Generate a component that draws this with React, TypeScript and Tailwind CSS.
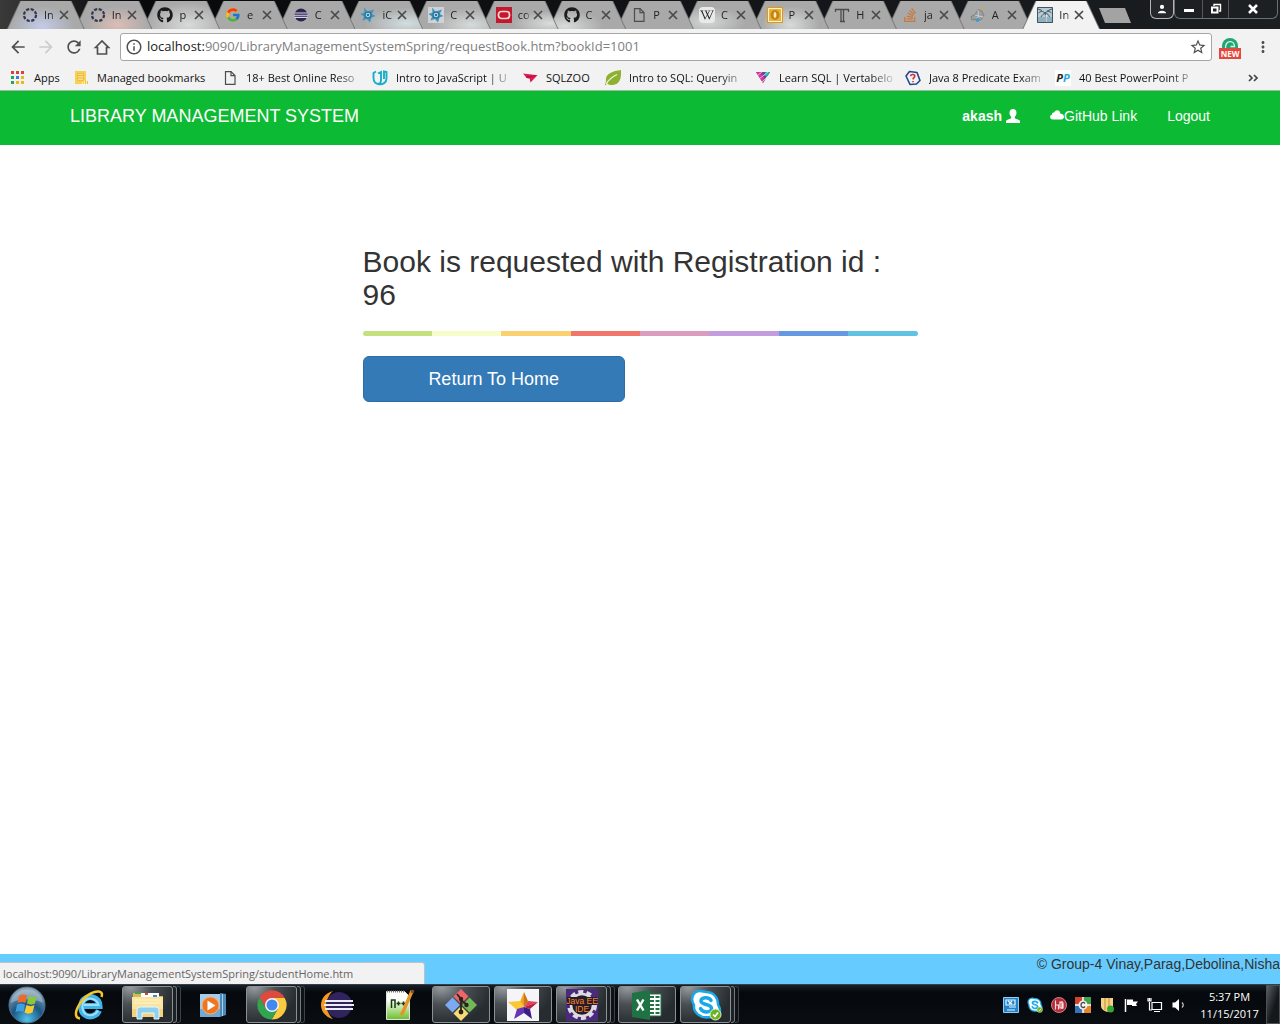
import type { ReactNode } from "react";
import { FaGithub, FaStackOverflow, FaWikipediaW } from "react-icons/fa";
import { FcGoogle } from "react-icons/fc";
import {
  MdArrowBack,
  MdArrowForward,
  MdInfoOutline,
  MdMoreVert,
  MdRefresh,
  MdStarBorder,
} from "react-icons/md";

/* ---------- small icons used in tabs and bookmarks ---------- */

const DottedRing = () => (
  <svg viewBox="0 0 16 16" className="size-4" fill="none" stroke="#34364f" strokeWidth="2.2">
    <circle cx="8" cy="8" r="6" strokeDasharray="3.2 1.51" />
  </svg>
);

const EclipseBall = () => (
  <svg viewBox="0 0 16 16" className="size-4">
    <circle cx="8" cy="8" r="6.5" fill="#2f2350" />
    <path d="M1.5 6h13M1 8.2h14M1.5 10.4h13" stroke="#d9d6e6" strokeWidth="1.1" />
  </svg>
);

const Compass = ({ boxed = false }: { boxed?: boolean }) => (
  <svg viewBox="0 0 16 16" className="size-4">
    {boxed && <path fill="#d0d2d4" d="M0 0h16v16H0z" />}
    <path d="M4 .5 7.500 4.500 14 2.500 11.800 7 15.500 9 11.500 10.500 10 15.500 7 12 2.500 13.500 4 9.500.5 7 4.500 5.500z" fill="#3f93bd" />
    <circle cx="8" cy="8" r="3.600" fill="#2c7398" />
    <circle cx="8" cy="8" r="2.300" fill="#a9d8ea" />
    <circle cx="8" cy="8" r="1.100" fill="#1d5674" />
  </svg>
);

const OracleMark = () => (
  <svg viewBox="0 0 16 16" className="size-4">
    <path fill="#c4182c" d="M0 0h16v16H0z" />
    <rect x="2.500" y="4.500" width="11" height="7" rx="3" fill="none" stroke="#f3d9dc" strokeWidth="1.700" />
  </svg>
);

const PageIcon = () => (
  <svg viewBox="0 0 16 16" className="size-4" fill="none" stroke="#4d4d4d" strokeWidth="1.200">
    <path d="M3.500 1.600h5.500l4 4v8.800H3.500z" />
    <path d="M9 1.600v4h4" />
  </svg>
);

const WikiMark = () => (
  <span className="flex size-4 items-center justify-center rounded-sm bg-[#e9e9e9]">
    <FaWikipediaW className="size-3.5 text-[#222222]" />
  </span>
);

const GoldMark = () => (
  <svg viewBox="0 0 16 16" className="size-4">
    <path fill="#d99a1e" d="M0 0h16v16H0z" />
    <path d="M1.500 1.500h13v13h-13z" fill="#e8b23c" stroke="#fff0c4" />
    <ellipse cx="8" cy="8" rx="4.500" ry="5" fill="#c7850f" />
    <ellipse cx="8" cy="8" rx="1.400" ry="3" fill="#fff0c4" />
  </svg>
);

const TypeMark = () => (
  <svg viewBox="0 0 16 16" className="size-4" fill="none" stroke="#4c4c4c">
    <path d="M1.500 5V2.500h13V5M6 14.500h5M7 3v11M9.500 3v11" strokeWidth="1.300" />
  </svg>
);

const SketchMark = () => (
  <svg viewBox="0 0 16 16" className="size-4" fill="none">
    <path d="M1 9.500l4-2 3-5 4 1.500 2 5-3 4-5-.5-4 .5z" fill="#999ea1" stroke="#7d8285" />
    <path d="M8 3l.5 6 5 1M5 8l4 1-3 3" stroke="#c8ccce" />
    <path d="M10.500 1.500l3 2" stroke="#d8a050" strokeWidth="1.800" />
    <circle cx="7.500" cy="13" r="1.900" fill="#4a96c8" />
  </svg>
);

const PalmMark = () => (
  <svg viewBox="0 0 16 16" className="size-4">
    <path fill="#b8ccd4" d="M0 0h16v16H0z" />
    <path fill="#8fb0bf" d="M0 10h16v6H0z" />
    <path
      d="M.5.500h15v15H.500zM8.500 15c.3-4 .2-6-.5-9M8 6C6 4 3.500 4 1.500 6M8 6c2-2 4.500-2 6.500 0M8 6C6.500 7 5 8 4 10M8 6c2 0 4 2 4.500 4M1 2l4 1.500M15 2l-5 2"
      fill="none"
      stroke="#3d5662"
      strokeWidth="1"
    />
    <path d="M9 8v7" stroke="#f2f6f7" />
  </svg>
);

const AppsGrid = () => (
  <svg viewBox="0 0 16 16" className="size-4">
    <path fill="#d94235" d="M1 1h3v3H1zM6 1h3v3H6zM11 1h3v3h-3z" />
    <path fill="#26a35a" d="M1 6h3v3H1zM1 11h3v3H1z" />
    <path fill="#3b7de0" d="M6 6h3v3H6z" />
    <path fill="#e9b91c" d="M11 6h3v3h-3zM6 11h3v3H6zM11 11h3v3h-3z" />
  </svg>
);

const FolderMark = () => (
  <svg viewBox="0 0 16 16" className="size-4">
    <path fill="#f8d054" d="M2 1h11v13H2z" />
    <path d="M4.500 3.500h6v7h-6z" fill="#fbe08a" stroke="#eebf3a" />
    <path d="M5 5.500h5M5 8h5" stroke="#e6b93d" />
    <path d="M11.500 14v-3.500M13.500 14v-3.500M9.500 14v-2" stroke="#fff1b5" />
    <path d="M12.500 10v4M14.500 11v3" stroke="#eebf3a" />
  </svg>
);

const UdacityMark = () => (
  <svg viewBox="0 0 16 16" className="size-4" fill="none" stroke="#17aecb" strokeWidth="1.900">
    <path d="M4 1.500 1.500 3v5c0 4 2.500 6 5.500 6" />
    <path d="M6 3.500 9 2v8c0 2-1 4-3 4 5 1 8.500-1.500 8.500-5.500V2l-2.500-.5v7.500" />
  </svg>
);

const ZooMark = () => (
  <svg viewBox="0 0 16 16" className="size-4">
    <path fill="#e01a4f" d="M1 3.500l14.500 1.800-7 7.200-.8-3.700-3-.8z" />
    <path fill="#a80f3a" d="M15.500 5.300 4.700 8l-.5-1.500z" />
  </svg>
);

const LeafMark = () => (
  <svg viewBox="0 0 16 16" className="size-4">
    <path fill="#8fb132" d="M16 0c.5 8-1 14-8 15-3 .4-5-.5-6-2l-1 2H0c0-2 1-3 1-4C0 4 7 1 16 0z" />
    <path d="M1 14C4 9 7 7 12 4.500" stroke="#eef4d4" strokeWidth="1.300" fill="none" />
  </svg>
);

const VertabeloMark = () => (
  <svg viewBox="0 0 16 16" className="size-4">
    <path fill="#7a3fa0" d="M1 2h14L8 13z" />
    <path fill="#d6349a" d="M1 2h4l5 7-2 4z" />
    <path fill="#27b4a8" d="M11 2h4l-3 5-3-2z" />
    <path d="M2 6l6-5M4 9l9-7M7 12l8-8" stroke="#f2f2f2" strokeWidth=".7" />
  </svg>
);

const QuestionMark = () => (
  <svg viewBox="0 0 16 16" className="size-4" fill="none">
    <path d="M4.500 1.500 12 2.500 15 10.500 11.500 14 5 14.500 1 6z" stroke="#24478f" strokeWidth="1.600" strokeLinejoin="round" />
    <path d="M5.500 6.200c.5-2.500 5-2 4.200.3C9.300 7.700 8.300 7.700 8 9.300M8 11v1.300" stroke="#d13434" strokeWidth="1.600" />
  </svg>
);

const PpMark = () => (
  <span className="flex size-4 items-center justify-center bg-white text-[11px] leading-4 font-bold italic">
    <span className="text-[#222222]">P</span>
    <span className="text-[#2aa5d8]">P</span>
  </span>
);

/* ---------- browser tab strip ---------- */

type Tab = { icon: ReactNode; title: string; glow?: string; active?: boolean };

const darkGithub = <FaGithub className="size-4 text-[#1b1b1b]" />;

const tabs: Tab[] = [
  { icon: <DottedRing />, title: "In", glow: "bg-[radial-gradient(ellipse_at_45%_90%,#c3cbe8,transparent_55%)]" },
  { icon: <DottedRing />, title: "In", glow: "bg-[radial-gradient(ellipse_at_55%_85%,#dcbdb6,transparent_55%)]" },
  { icon: darkGithub, title: "p", glow: "bg-[radial-gradient(ellipse_at_60%_85%,#d8dbd9,transparent_65%)]" },
  { icon: <FcGoogle className="size-4" />, title: "e" },
  { icon: <EclipseBall />, title: "C" },
  { icon: <Compass />, title: "iC", glow: "bg-[radial-gradient(ellipse_at_80%_80%,#d2dedf,transparent_50%)]" },
  { icon: <Compass boxed />, title: "C", glow: "bg-[radial-gradient(ellipse_at_75%_85%,#d6dada,transparent_50%)]" },
  { icon: <OracleMark />, title: "co", glow: "bg-[radial-gradient(ellipse_at_90%_80%,#dadddb,transparent_40%)]" },
  { icon: darkGithub, title: "C", glow: "bg-[radial-gradient(ellipse_at_20%_90%,#d8dcda,transparent_45%)]" },
  { icon: <PageIcon />, title: "P" },
  { icon: <WikiMark />, title: "C", glow: "bg-[radial-gradient(ellipse_at_30%_75%,#d4d6d6,transparent_50%)]" },
  { icon: <GoldMark />, title: "P", glow: "bg-[radial-gradient(ellipse_at_50%_85%,#d8dada,transparent_55%)]" },
  { icon: <TypeMark />, title: "H" },
  { icon: <FaStackOverflow className="size-4 text-[#c8793f]" />, title: "ja" },
  { icon: <SketchMark />, title: "A" },
  { icon: <PalmMark />, title: "In", active: true },
];

function BrowserTab({ tab, index }: { tab: Tab; index: number }) {
  return (
    <div
      className="relative flex h-7 min-w-0 flex-1 items-center pl-[15px]"
      style={{ zIndex: tab.active ? 30 : 20 - index }}
    >
      <div className="absolute inset-y-0 -right-[10px] left-0 bg-[#777777] [clip-path:polygon(13px_0,calc(100%-13px)_0,100%_100%,0_100%)]" />
      <div
        className={`absolute inset-y-0 -right-[9px] left-px [clip-path:polygon(13px_0,calc(100%-13px)_0,100%_100%,0_100%)] ${
          tab.active ? "bg-[#f2f2f2]" : "bg-[#a9a9a9]"
        }`}
      >
        {tab.glow && <div className={`size-full ${tab.glow}`} />}
      </div>
      <button type="button" className="relative flex items-center gap-1.5">
        {tab.icon}
        <span className="w-3.5 text-left text-[11px] whitespace-nowrap text-[#222222] [mask-image:linear-gradient(to_right,black_50%,transparent_95%)]">
          {tab.title}
        </span>
      </button>
      <button type="button" aria-label="Close tab" className="relative">
        <svg viewBox="0 0 12 12" className="size-3" stroke="#4a4a4a" strokeWidth="1.700">
          <path d="M2 2l8 8M10 2l-8 8" />
        </svg>
      </button>
    </div>
  );
}

function WindowControls() {
  return (
    <div className="flex h-[19px] shrink-0 pr-0.5">
      <button
        type="button"
        aria-label="Profile"
        className="flex w-6 items-center justify-center rounded-b-md border border-t-0 border-[#b5b5b5] bg-[#25272a]"
      >
        <svg viewBox="0 0 12 12" className="size-2.5" fill="white">
          <circle cx="6" cy="3.500" r="2.500" />
          <path d="M1 11c0-4 10-4 10 0z" />
        </svg>
      </button>
      <div className="flex w-[104px] rounded-b-md border border-t-0 border-[#6d7072] bg-[#1d2022]">
        <button type="button" aria-label="Minimize" className="flex w-7 items-center justify-center border-r border-[#55585a]">
          <svg viewBox="0 0 12 12" className="size-3" fill="white">
            <path d="M1 6h10v3H1z" />
          </svg>
        </button>
        <button type="button" aria-label="Restore" className="flex w-[26px] items-center justify-center border-r border-[#55585a]">
          <svg viewBox="0 0 12 12" className="size-3" fill="none" stroke="white">
            <path d="M4 3V1.500h6.500V8H9" strokeWidth="1.400" />
            <path d="M2 4.500h5.500v5H2z" strokeWidth="2" />
          </svg>
        </button>
        <button type="button" aria-label="Close" className="flex flex-1 items-center justify-center">
          <svg viewBox="0 0 12 12" className="size-3" stroke="white" strokeWidth="2.500">
            <path d="M2 2l8 8M10 2l-8 8" />
          </svg>
        </button>
      </div>
    </div>
  );
}

function TabStrip() {
  return (
    <div className="flex h-[29px] bg-linear-to-r from-[#3a3a3a] via-[#08090b] via-10% to-[#1c1f22]">
      <div className="flex min-w-0 flex-1 items-end pl-[7px]">
        {tabs.map((tab, index) => (
          <BrowserTab key={index} tab={tab} index={index} />
        ))}
      </div>
      <div className="flex w-[190px] shrink-0 justify-between pl-[9px]">
        <button
          type="button"
          aria-label="New tab"
          className="mt-2 h-[15px] w-8 bg-[#a3a3a3] [clip-path:polygon(0_0,26px_0,100%_100%,6px_100%)]"
        />
        <WindowControls />
      </div>
    </div>
  );
}

/* ---------- address bar and bookmarks ---------- */

function AddressBar() {
  return (
    <div className="flex h-9 items-center pl-2">
      <div className="flex w-28 shrink-0 items-center gap-2 text-[#505050]">
        <button type="button" aria-label="Back">
          <MdArrowBack className="size-5" />
        </button>
        <button type="button" aria-label="Forward" className="text-[#cccccc]">
          <MdArrowForward className="size-5" />
        </button>
        <button type="button" aria-label="Reload">
          <MdRefresh className="size-5" />
        </button>
        <button type="button" aria-label="Home">
          <svg viewBox="0 0 20 20" className="size-5" fill="none" stroke="currentColor" strokeWidth="1.700">
            <path d="M3.500 10.500 10 4l6.500 6.500h-2V17h-9v-6.500z" />
          </svg>
        </button>
      </div>
      <div className="flex h-7 min-w-0 flex-1 items-center rounded-[3px] border border-[#a6a6a6] bg-white px-1">
        <MdInfoOutline className="size-[18px] shrink-0 text-[#505050]" />
        <p className="ml-1 flex-1 truncate text-[13px] text-[#808080]">
          <span className="text-[#222222]">localhost:</span>9090/LibraryManagementSystemSpring/requestBook.htm?bookId=1001
        </p>
        <button type="button" aria-label="Bookmark this page">
          <MdStarBorder className="size-[18px] text-[#505050]" />
        </button>
      </div>
      <div className="flex w-[68px] shrink-0 items-center justify-between pr-2 pl-[7px]">
        <button type="button" aria-label="Grammar extension" className="flex w-[22px] flex-col items-center pt-0.5">
          <svg viewBox="0 0 16 10" className="h-2.5 w-4">
            <path fill="#1fa672" d="M0 10V8a8 8 0 0 1 16 0v2z" />
            <path d="M3.500 10c0-8 8-8 9-2.500v1H8.500" fill="none" stroke="#dff5ec" strokeWidth="1.300" />
          </svg>
          <span className="w-full bg-[#e2483d] text-center text-[8px] leading-[11px] font-bold text-white">NEW</span>
        </button>
        <button type="button" aria-label="Menu">
          <MdMoreVert className="size-[18px] text-[#505050]" />
        </button>
      </div>
    </div>
  );
}

const bookmarks = [
  { icon: <AppsGrid />, label: "Apps", width: "w-[27px]" },
  { icon: <FolderMark />, label: "Managed bookmarks", width: "w-[113px]" },
  { icon: <PageIcon />, label: "18+ Best Online Reso", width: "w-[114px]", fade: true },
  { icon: <UdacityMark />, label: "Intro to JavaScript | U", width: "w-[114px]", fade: true },
  { icon: <ZooMark />, label: "SQLZOO", width: "w-[47px]" },
  { icon: <LeafMark />, label: "Intro to SQL: Queryin", width: "w-[114px]", fade: true },
  { icon: <VertabeloMark />, label: "Learn SQL | Vertabelo", width: "w-[114px]", fade: true },
  { icon: <QuestionMark />, label: "Java 8 Predicate Exam", width: "w-[114px]", fade: true },
  { icon: <PpMark />, label: "40 Best PowerPoint P", width: "w-[114px]", fade: true },
];

function BookmarkBar() {
  return (
    <nav className="flex h-[26px] items-center gap-3 border-b border-[#9ab89f] pr-[21px] pl-2.5">
      {bookmarks.map((item) => (
        <a key={item.label} href="#bookmark" className="flex items-center gap-2 text-[11px] leading-4 text-[#111111]">
          {item.icon}
          <span
            className={`${item.width} whitespace-nowrap ${
              item.fade ? "[mask-image:linear-gradient(to_right,black_80%,transparent_105%)]" : ""
            }`}
          >
            {item.label}
          </span>
        </a>
      ))}
      <button type="button" aria-label="More bookmarks" className="ml-auto">
        <svg viewBox="0 0 12 12" className="size-3" fill="none" stroke="#444444" strokeWidth="1.700">
          <path d="M2 3l3 3-3 3M7 3l3 3-3 3" />
        </svg>
      </button>
    </nav>
  );
}

/* ---------- web page ---------- */

const stripeColors = [
  "bg-[#c4e17f]",
  "bg-[#f7fdca]",
  "bg-[#fad071]",
  "bg-[#f0766b]",
  "bg-[#db9dbe]",
  "bg-[#c49cdf]",
  "bg-[#6599e2]",
  "bg-[#61c2e4]",
];

function SiteHeader() {
  return (
    <header className="bg-[#0cba33] text-white">
      <div className="mx-auto flex h-[54px] max-w-[1170px] items-center justify-between px-[15px] pb-1">
        <a href="#home" className="text-lg">
          LIBRARY MANAGEMENT SYSTEM
        </a>
        <nav className="flex gap-[30px] text-sm">
          <a href="#profile" className="flex items-center gap-1 font-bold">
            akash
            <svg viewBox="0 0 14 14" className="size-3.5" fill="white">
              <path d="M7 0c2.200 0 3.500 1.500 3.500 3.800 0 1.700-.7 3.200-1.700 4v1.400l4.200 1.900c.7.300 1 .8 1 1.500V14H0v-1.400c0-.7.300-1.200 1-1.500l4.200-1.900V7.800c-1-.8-1.700-2.300-1.700-4C3.500 1.500 4.800 0 7 0z" />
            </svg>
          </a>
          <a href="#github" className="flex items-center">
            <svg viewBox="0 0 14 14" className="size-3.5" fill="white">
              <path d="M2.800 10.500C-.6 10.500-.7 6.200 2 5.800 1.700 3.800 3.200 3.200 4.200 3.500 5.500.3 10.200.7 10.400 4.700c4.400-.5 4.800 5.800 1 5.800z" />
            </svg>
            GitHub Link
          </a>
          <a href="#logout">Logout</a>
        </nav>
      </div>
    </header>
  );
}

function RequestResult() {
  return (
    <main className="mx-auto w-full max-w-[1170px] flex-1 pt-[100px]">
      <section className="mx-auto w-1/2 px-[15px]">
        <h2 className="text-3xl leading-[33px] text-[#333333]">Book is requested with Registration id : 96</h2>
        <div className="my-5 flex h-[5px] overflow-hidden rounded-[5px]">
          {stripeColors.map((color) => (
            <span key={color} className={`flex-1 ${color}`} />
          ))}
        </div>
        <div className="-mx-[15px]">
          <div className="w-1/2 px-[15px]">
            <button
              type="button"
              className="h-[46px] w-full rounded-md border border-[#2e6da4] bg-[#337ab7] text-lg text-white"
            >
              Return To Home
            </button>
          </div>
        </div>
      </section>
    </main>
  );
}

/* ---------- desktop taskbar ---------- */

const StartOrb = () => (
  <svg viewBox="0 0 38 38" className="size-[38px]">
    <defs>
      <radialGradient id="orb" cx="50%" cy="90%" r="85%">
        <stop offset="0" stopColor="#4fc3ea" />
        <stop offset=".5" stopColor="#1c5684" />
        <stop offset="1" stopColor="#8ba5b6" />
      </radialGradient>
    </defs>
    <circle cx="19" cy="19" r="18" fill="url(#orb)" stroke="#50718a" />
    <path d="M3 17C5-1 33-1 35 17 26 12 12 12 3 17z" fill="#d5e2ea" opacity=".4" />
    <path d="M11 10c3-2 5-2 8-.5L17.500 17c-3-1.500-5-1.500-8 0z" fill="#ee6a2c" />
    <path d="M20.500 10c3 1.500 5.500 1.500 8.500-.5l-2 8c-3 1.500-5 1.500-8 0z" fill="#8cc63e" />
    <path d="M9 18.500c3-1.500 5-1.500 8 0L15.500 26c-3-1.500-5-1.500-8 0z" fill="#3e9fe0" />
    <path d="M18.500 19c3 1.500 5 1.500 8 0l-2 7.500c-3 1.500-5 1.500-8 0z" fill="#fcc92e" />
  </svg>
);

const InternetExplorer = () => (
  <svg viewBox="0 0 32 32" className="size-8" fill="none">
    <path d="M26 21.500C23.500 27.500 16 29 11.500 25.500 7 22 7.500 13.500 11 10.500 16 6 26 8 26.500 17H10" stroke="#43b4ea" strokeWidth="6" />
    <path d="M25 21.500c-2.500 5-8.500 6-12.500 3.500-4-3-4-10.500-.5-13.500 4-3.500 12-2 13.500 4.500H11" stroke="#9be0fb" strokeWidth="2" />
    <path d="M7 29.500C-5 28 12 1 26 2.500c3 .5 3.500 2.500 2.500 5.500" stroke="#f5c629" strokeWidth="2.500" />
  </svg>
);

const Explorer = () => (
  <svg viewBox="0 0 34 32" className="h-8 w-[34px]">
    <path fill="#d9b65c" d="M2 4h9l2 3h19v20H2z" />
    <path fill="#43a047" d="M4 3h6v2H4z" />
    <path fill="#fff" d="M10 4h18v5H10z" />
    <path fill="#d64545" d="M14 4h3v2h-3z" />
    <path fill="#4088d8" d="M22 6h4v2h-4z" />
    <path fill="#f9e5a0" d="M1 8h31v20H1z" />
    <path fill="#f2d27a" d="M1 20h31v8H1z" />
    <path d="M3 11h27M3 14h27" stroke="#fff4cc" />
    <path fill="#8fd0f0" stroke="#e5f6ff" d="M6 30V21q0-3 3-3h16q3 0 3 3v9h-5v-6H11v6z" />
  </svg>
);

const MediaPlayer = () => (
  <svg viewBox="0 0 28 28" className="size-7">
    <path fill="#4c88b5" d="M21 2l6 1v21l-6 2z" />
    <path d="M23.500 3v22" stroke="#a5d0ec" />
    <path fill="#a3cdea" d="M1 3h20v23H1z" />
    <path fill="#6fa8d2" d="M1 18h20v8H1z" />
    <circle cx="11.500" cy="14.500" r="8.500" fill="#ee7623" stroke="#ffb06d" />
    <path fill="white" d="M8.500 9.500l8 5-8 5z" />
  </svg>
);

const Chrome = () => (
  <svg viewBox="0 0 30 30" className="size-[30px]">
    <path fill="#dd4b3e" d="M15 15 2.500 7.500a14.500 14.500 0 0 1 25 0z" />
    <path fill="#dd4b3e" d="M2.500 7.500 8.800 18.500 15 8h12.500z" />
    <path fill="#fcca3f" d="M15 8h12.700A14.500 14.500 0 0 1 14.700 29.500L21 18.500z" />
    <path fill="#32a350" d="M2.500 7.500 8.800 18.500 15 22l6-3.500-6.300 11A14.500 14.500 0 0 1 2.500 7.500z" />
    <circle cx="15" cy="15" r="7" fill="#f4f4f4" />
    <circle cx="15" cy="15" r="5.500" fill="#4587f0" />
  </svg>
);

const Eclipse = () => (
  <svg viewBox="0 0 34 30" className="h-[30px] w-[34px]">
    <path d="M13 1C-3 5-3 25 13 29 5 23 5 7 13 1z" fill="#f39a24" />
    <circle cx="19" cy="15" r="13" fill="#31235e" />
    <path d="M5 11h28M4 15h30M5 19h28" stroke="#ededf5" strokeWidth="1.900" />
  </svg>
);

const NotepadPlus = () => (
  <svg viewBox="0 0 32 34" className="h-[34px] w-8">
    <defs>
      <linearGradient id="npp" x2="0" y2="1">
        <stop offset=".3" stopColor="#fdfff8" />
        <stop offset="1" stopColor="#6abf2a" />
      </linearGradient>
    </defs>
    <path fill="url(#npp)" stroke="#dfe5dc" d="M3.500 3.500h18l5 5v23h-23z" />
    <path d="M4 3.500h17" stroke="#777" strokeWidth="2" strokeDasharray="1 1" />
    <path d="M8.500 20V12h3.500v8M13.500 15.500h4M15.500 13.500v4M18.500 15.500h4M20.500 13.500v4" stroke="#173713" strokeWidth="1.500" fill="none" />
    <path d="M29 3 20 24l-2 3" stroke="#e5962b" strokeWidth="3.500" />
    <path d="M30 2l-1 3" stroke="#8a4b2a" strokeWidth="3" />
  </svg>
);

const GitBash = () => (
  <svg viewBox="0 0 34 34" className="size-[34px]">
    <path fill="#f0656a" d="M17 1l7.500 7.500L17 16 9.500 8.500z" />
    <path fill="#7da9f0" d="M8.500 9.500 16 17l-7.500 7.500L1 17z" />
    <path fill="#75b957" d="M25.500 9.500 33 17l-7.500 7.500L18 17z" />
    <path fill="#f7db75" d="M17 18l7.500 7.500L17 33l-7.500-7.500z" />
    <path d="M13 6l4 5v14M17 12l6 5" stroke="#28231f" strokeWidth="1.800" fill="none" />
    <circle cx="17" cy="11" r="2.200" fill="#28231f" />
    <circle cx="22.500" cy="17" r="2.200" fill="#28231f" />
    <circle cx="17" cy="24" r="2.400" fill="#28231f" />
  </svg>
);

const StarTile = () => (
  <svg viewBox="0 0 32 32" className="size-8">
    <path fill="#f5f4f6" d="M0 0h32v32H0z" />
    <path fill="#f2a01d" d="M17 3v15l-4-5z" />
    <path fill="#c87712" d="M17 3l4 9-4 6z" />
    <path fill="#fac833" d="M1 13l12-1 4 6-7 3z" />
    <path fill="#e04455" d="M21 12l10 1-14 5z" />
    <path fill="#b82040" d="M31 13l-8 7-6-2z" />
    <path fill="#3b1d86" d="M23 20l2 10-8-6v-6z" />
    <path fill="#6435b5" d="M10 20l7-2v6l-10 6z" />
  </svg>
);

const JavaEe = () => (
  <svg viewBox="0 0 32 32" className="size-8">
    <path fill="#4b2a7d" d="M0 0h32v32H0z" />
    <circle cx="16" cy="16" r="13" fill="none" stroke="#dcdce0" strokeWidth="4" strokeDasharray="5 3.168" />
    <circle cx="16" cy="16" r="11" fill="#271a2d" stroke="#dcdce0" strokeWidth="2.500" />
    <path fill="#271a2d" d="M1 8h30v8H1z" />
    <text x="16" y="15" fill="#f58a1f" fontSize="8.500" textAnchor="middle" fontFamily="Liberation Sans, sans-serif">
      Java EE
    </text>
    <text x="16" y="23" fill="#f58a1f" fontSize="8.500" textAnchor="middle" fontFamily="Liberation Sans, sans-serif">
      IDE
    </text>
  </svg>
);

const Excel = () => (
  <svg viewBox="0 0 32 32" className="size-8">
    <path fill="#fff" stroke="#1f7244" d="M17 5h13v22H17z" />
    <path d="M19 8h10M19 12h10M19 16h10M19 20h10M19 24h10" stroke="#1f7244" strokeWidth="2" strokeDasharray="4 1.500" />
    <path fill="#1f7244" d="M1 4l18-3v30L1 28z" />
    <path d="M6 10.500l6.500 11M12.500 10.500 6 21.500" stroke="#fff" strokeWidth="2.400" />
  </svg>
);

const SkypeCloud = ({ className }: { className: string }) => (
  <svg viewBox="0 0 32 32" className={className}>
    <path
      d="M10 2c3 0 4 1 6 1 8 0 12 6 12 12 0 2 2 3 2 6 0 5-5 9-10 7C10 30 3 23 4 16 0 10 3 2 10 2z"
      fill="#fff"
      stroke="#19a9e8"
      strokeWidth="2.500"
    />
    <path
      d="M21 11.500C19 7.500 11 8 11 12c0 4.500 10.500 2.500 10.500 7.500 0 4.500-9 4.500-11 0"
      fill="none"
      stroke="#19a9e8"
      strokeWidth="3.500"
      strokeLinecap="round"
    />
    <circle cx="25.500" cy="25.500" r="5.500" fill="#6fb21f" stroke="#e2f2cf" />
    <path d="M23 25.500l2 2 3-4" fill="none" stroke="#fff" strokeWidth="1.500" />
  </svg>
);

const pinned = [
  { name: "Internet Explorer", icon: <InternetExplorer /> },
  { name: "File Explorer", icon: <Explorer />, open: true, stacked: true },
  { name: "Media Player", icon: <MediaPlayer /> },
  { name: "Chrome", icon: <Chrome />, open: true, stacked: true },
  { name: "Eclipse", icon: <Eclipse /> },
  { name: "Notepad++", icon: <NotepadPlus /> },
  { name: "Git", icon: <GitBash />, open: true },
  { name: "Star", icon: <StarTile />, open: true },
  { name: "Java EE", icon: <JavaEe />, open: true, stacked: true },
  { name: "Excel", icon: <Excel />, open: true },
  { name: "Skype", icon: <SkypeCloud className="size-8" />, open: true, stacked: true },
];

const tray = [
  {
    name: "Network client",
    icon: (
      <svg viewBox="0 0 16 16" className="size-4">
        <path fill="#2382c8" stroke="#90cdf2" d="M.5.500h15v15H.500z" />
        <path d="M3 3h9v5H3zM6 10h7M4 13h8M5 4l4 3M9 4 6 7" fill="none" stroke="#eaf7ff" strokeWidth="1.200" />
      </svg>
    ),
  },
  { name: "Skype", icon: <SkypeCloud className="size-4" /> },
  {
    name: "Antivirus",
    icon: (
      <svg viewBox="0 0 16 16" className="size-4">
        <circle cx="8" cy="8" r="7.500" fill="#b52b37" stroke="#dc7c83" />
        <path d="M4.500 3.500v9M4.500 8h3v4.500M9 5l3 1v5H9zM11 4v8" fill="none" stroke="#f7dfe1" strokeWidth="1.200" />
      </svg>
    ),
  },
  {
    name: "Citrix",
    icon: (
      <svg viewBox="0 0 16 16" className="size-4">
        <path fill="#d5432e" d="M0 0h8v8H0z" />
        <path fill="#3ea34a" d="M8 0h8v8H8z" />
        <path fill="#3572b8" d="M0 8h8v8H0z" />
        <path fill="#e5862d" d="M8 8h8v8H8z" />
        <path d="M8 0v16M0 8h16" stroke="#fff" strokeWidth="1.500" />
        <circle cx="8" cy="8" r="4.500" fill="#f2f2f2" />
        <path d="M10 6.500c-1.500-2-4-1-4 1.500s2.500 3.500 4 1.500" fill="none" stroke="#444" strokeWidth="1.300" />
      </svg>
    ),
  },
  {
    name: "Shield",
    icon: (
      <svg viewBox="0 0 16 16" className="size-4">
        <path fill="#f4d484" d="M2 1h12v8c0 3-3 5-6 6-3-1-6-3-6-6z" />
        <path d="M6 1v12M10 1v12" stroke="#c38a2c" />
        <circle cx="11.500" cy="12" r="3.500" fill="#37a637" />
      </svg>
    ),
  },
  {
    name: "Action center",
    icon: (
      <svg viewBox="0 0 16 16" className="size-4">
        <path d="M2.500 2v13" stroke="#fff" strokeWidth="1.500" />
        <path fill="#fff" d="M4 2.500h6v2h5l-2 2.500 1 2H9V8H4z" />
      </svg>
    ),
  },
  {
    name: "Network",
    icon: (
      <svg viewBox="0 0 16 16" className="size-4" fill="none" stroke="#fff" strokeWidth="1.200">
        <path d="M5 5.500h9.500v7H5zM7 14.500h6M2.500 5v8H5M1 1v3h3V1M2.500 1v3" />
      </svg>
    ),
  },
  {
    name: "Volume",
    icon: (
      <svg viewBox="0 0 16 16" className="size-4">
        <path fill="#fff" d="M1.500 5.500h2.500L8 2v12l-4-3.500H1.500z" />
        <path d="M11 5.500c1.500 1.500 1.500 3.500 0 5" fill="none" stroke="#c5c5c5" strokeWidth="1.200" />
      </svg>
    ),
  },
];

function Taskbar() {
  return (
    <footer className="flex h-10 shrink-0 items-stretch border-t border-[#35404a] bg-linear-to-b from-[#182028] via-[#05080c] via-20% to-[#0a0e12] text-white">
      <button type="button" aria-label="Start" className="flex w-[58px] items-center pl-2">
        <StartOrb />
      </button>
      {pinned.map((app) => (
        <div key={app.name} className="flex w-[62px] py-px pl-0.5">
          <button
            type="button"
            aria-label={app.name}
            className={`flex items-center justify-center ${app.stacked ? "w-[51px]" : "w-[58px]"} ${
              app.open
                ? "rounded-[3px] border border-[#8b9094] bg-[radial-gradient(ellipse_at_15%_0%,#989da1,#4a4f54_35%,#272c31_75%)]"
                : ""
            }`}
          >
            {app.icon}
          </button>
          {app.stacked && <span className="w-1 rounded-r-[3px] border border-l-0 border-[#74797d] bg-[#1c2126]" />}
          {app.stacked && <span className="w-1 rounded-r-[3px] border border-l-0 border-[#3d4246] bg-[#0e1216]" />}
        </div>
      ))}
      <div className="ml-auto flex items-center gap-2 pr-2.5">
        {tray.map((item) => (
          <button key={item.name} type="button" aria-label={item.name}>
            {item.icon}
          </button>
        ))}
      </div>
      <div className="flex w-[65px] flex-col items-center justify-center text-[11px] leading-[17px] whitespace-nowrap">
        <span>5:37 PM</span>
        <span>11/15/2017</span>
      </div>
      <button
        type="button"
        aria-label="Show desktop"
        className="ml-1 w-3.5 border border-[#4a5055] bg-linear-to-br from-[#5b6064] to-[#14181b] to-60%"
      />
    </footer>
  );
}

export default function App() {
  return (
    <div className="flex min-h-screen flex-col bg-white font-['Open_Sans',sans-serif]">
      <div className="bg-[#f2f2f2]">
        <TabStrip />
        <AddressBar />
        <BookmarkBar />
      </div>
      <div className="relative flex flex-1 flex-col font-['Liberation_Sans',Arial,sans-serif]">
        <SiteHeader />
        <RequestResult />
        <div className="h-[30px] bg-[#66ccff] text-right text-sm text-[#333333]">© Group-4 Vinay,Parag,Debolina,Nisha</div>
        <div className="absolute bottom-0 left-0 h-[22px] w-[425px] rounded-tr-[3px] border-t border-r border-[#b9c3c9] bg-[#f2f2f2] pl-[3px] font-['Open_Sans',sans-serif] text-[11px] leading-[22px] text-[#666666]">
          localhost:9090/LibraryManagementSystemSpring/studentHome.htm
        </div>
      </div>
      <Taskbar />
    </div>
  );
}
